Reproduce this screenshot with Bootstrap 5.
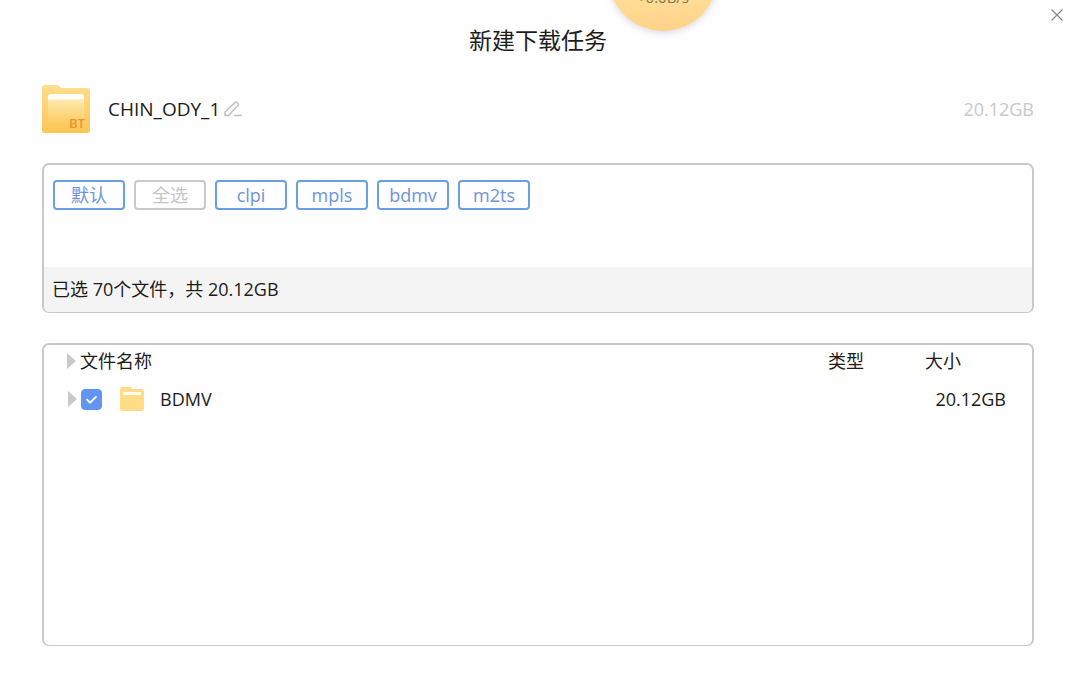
<!DOCTYPE html>
<html lang="zh-CN">
<head>
<meta charset="utf-8">
<meta name="viewport" content="width=device-width, initial-scale=1">
<title>新建下载任务</title>
<link href="https://cdn.jsdelivr.net/npm/bootstrap@5.3.0/dist/css/bootstrap.min.css" rel="stylesheet">
<style>
  body { font-family: "Open Sans", "Noto Sans CJK SC", sans-serif; font-size: 18px; line-height: 24px; color: #1c1c1c; background: #fefefe; }
  .dialog { padding: 0 42px 27px; overflow: hidden; }
  .dialog-title { font-size: 23px; line-height: 32px; font-weight: 400; margin: 24px 0 29px; }
  .btn-x { top: 8px; right: 12px; width: 14px; height: 14px; }
  .btn-plain { border: 0; padding: 0; background: none; display: block; line-height: 0; }
  .speed-ball { top: -79px; left: 50%; margin-left: 70px; width: 110px; height: 110px; padding-top: 64px; border-radius: 50%; background: linear-gradient(#ffe6b0 50%, #ffdc95 72%, #fed28a); box-shadow: 0 2px 6px rgba(120, 110, 150, .25); font-size: 15px; color: #877552; }
  .task-head { gap: 18px; margin-bottom: 30px; }
  .task-name { font-size: 19px; }
  .task-size { color: #c9c9c9; }
  .panel { border: 2px solid #c9c9c9; border-bottom-width: 1px; border-radius: 7px; overflow: hidden; }
  .filters { gap: 9px; padding: 15px 9px; min-height: 102px; }
  .btn-filter { width: 72px; height: 30px; padding: 0; border: 2px solid #6a9fe4; border-radius: 4px; font-size: 18px; line-height: 26px; color: #6f94dc; }
  .btn-filter:disabled { opacity: 1; color: #c6c6c6; border-color: #c9c9c9; }
  .summary { background: #f4f4f4; padding: 10px 8px 11px; }
  .files-panel { margin-top: 30px; }
  .file-table { table-layout: fixed; }
  .file-table th { font-weight: 400; padding: 4px 0; }
  .file-table td { padding: 10px 0 8px; vertical-align: middle; }
  .file-table th:first-child { padding-left: 22px; }
  .file-table td:first-child { padding-left: 24px; }
  .col-type { width: 97px; }
  .col-size { width: 107px; }
  .size-cell { padding-right: 26px !important; }
  .check-file { width: 21px; height: 21px; margin: 0 18px 0 3px; border-radius: 4px !important; }
  .check-file:checked { background-color: #6294f4; border-color: #6294f4; background-image: url("data:image/svg+xml,%3csvg xmlns='http://www.w3.org/2000/svg' viewBox='0 0 21 21'%3e%3cpath fill='none' stroke='%23fff' stroke-width='2' d='M5 10l4 4 7-7'/%3e%3c/svg%3e"); }
  .folder-small { margin-right: 16px; }
  .bt-mark { font: 600 13px "Open Sans", sans-serif; }
</style>
</head>
<body>
<main class="dialog position-relative d-flex flex-column min-vh-100">
  <div class="speed-ball position-absolute text-center">+0.0B/s</div>
  <button type="button" class="btn-plain btn-x position-absolute" aria-label="关闭">
    <svg width="14" height="14" viewBox="0 0 14 14" stroke="#888" stroke-width="1.2"><path d="M1.5 1.5l11 11M12.500 1.500l-11 11"/></svg>
  </button>
  <h1 class="dialog-title text-center">新建下载任务</h1>

  <header class="task-head d-flex align-items-center">
    <svg width="48" height="48" viewBox="0 0 48 48" role="img" aria-label="BT">
      <defs>
        <linearGradient id="folder" x2="0" y2="1"><stop stop-color="#ffde8c"/><stop offset="1" stop-color="#fdc556"/></linearGradient>
        <linearGradient id="sheet" x2="0" y2="1"><stop offset=".15" stop-color="#fffef5"/><stop offset=".2" stop-color="#ffe9b0"/><stop offset="1" stop-color="#ffdc86" stop-opacity="0"/></linearGradient>
      </defs>
      <path fill="url(#folder)" d="M0 3q0-3 3-3h12q2 0 3 1.500l1 1.500h26q3 0 3 3v39q0 3-3 3H3q-3 0-3-3z"/>
      <path fill="url(#sheet)" d="M6 12q0-3 3-3h30q3 0 3 3v28H6z"/>
      <text class="bt-mark" x="27" y="43" fill="#ea962f">BT</text>
    </svg>
    <div class="d-flex align-items-center flex-grow-1">
      <span class="task-name">CHIN_ODY_1</span>
      <button type="button" class="btn-plain ms-1" aria-label="重命名">
        <svg width="18" height="16" viewBox="0 0 18 16" fill="none" stroke="#c2c2c2" stroke-width="1.500"><path d="M1 11L11 1.500q1-1 2 0l1 1q1 1 0 2L4.500 14.500H1zM10 14.500h8"/></svg>
      </button>
    </div>
    <span class="task-size">20.12GB</span>
  </header>

  <section class="panel">
    <div class="filters d-flex flex-wrap align-items-start">
      <button type="button" class="btn btn-filter">默认</button>
      <button type="button" class="btn btn-filter" disabled>全选</button>
      <button type="button" class="btn btn-filter">clpi</button>
      <button type="button" class="btn btn-filter">mpls</button>
      <button type="button" class="btn btn-filter">bdmv</button>
      <button type="button" class="btn btn-filter">m2ts</button>
    </div>
    <div class="summary">已选 70个文件，共 20.12GB</div>
  </section>

  <section class="panel files-panel flex-grow-1">
    <table class="file-table w-100">
      <colgroup><col><col class="col-type"><col class="col-size"></colgroup>
      <thead>
        <tr>
          <th scope="col"><div class="d-flex align-items-center"><svg class="me-1" width="10" height="16" viewBox="0 0 10 16" fill="#c9c9c9"><path d="M1 0l9 8-9 8z"/></svg>文件名称</div></th>
          <th scope="col">类型</th>
          <th scope="col">大小</th>
        </tr>
      </thead>
      <tbody>
        <tr>
          <td>
            <div class="d-flex align-items-center">
              <svg width="10" height="16" viewBox="0 0 10 16" fill="#c9c9c9"><path d="M0 0l9 8-9 8z"/></svg>
              <input class="form-check-input check-file" type="checkbox" id="file-bdmv" checked>
              <svg class="folder-small" width="24" height="24" viewBox="0 0 24 24"><path fill="#ffdc86" d="M0 2q0-2 2-2h7q2 0 2.500 1l.5 1h10q2 0 2 2v18q0 2-2 2H2q-2 0-2-2z"/><path fill="#fffdf4" d="M3 5h18v3H3z"/></svg>
              <label for="file-bdmv">BDMV</label>
            </div>
          </td>
          <td></td>
          <td class="size-cell text-end">20.12GB</td>
        </tr>
      </tbody>
    </table>
  </section>
</main>
<script src="https://cdn.jsdelivr.net/npm/bootstrap@5.3.0/dist/js/bootstrap.bundle.min.js"></script>
</body>
</html>
